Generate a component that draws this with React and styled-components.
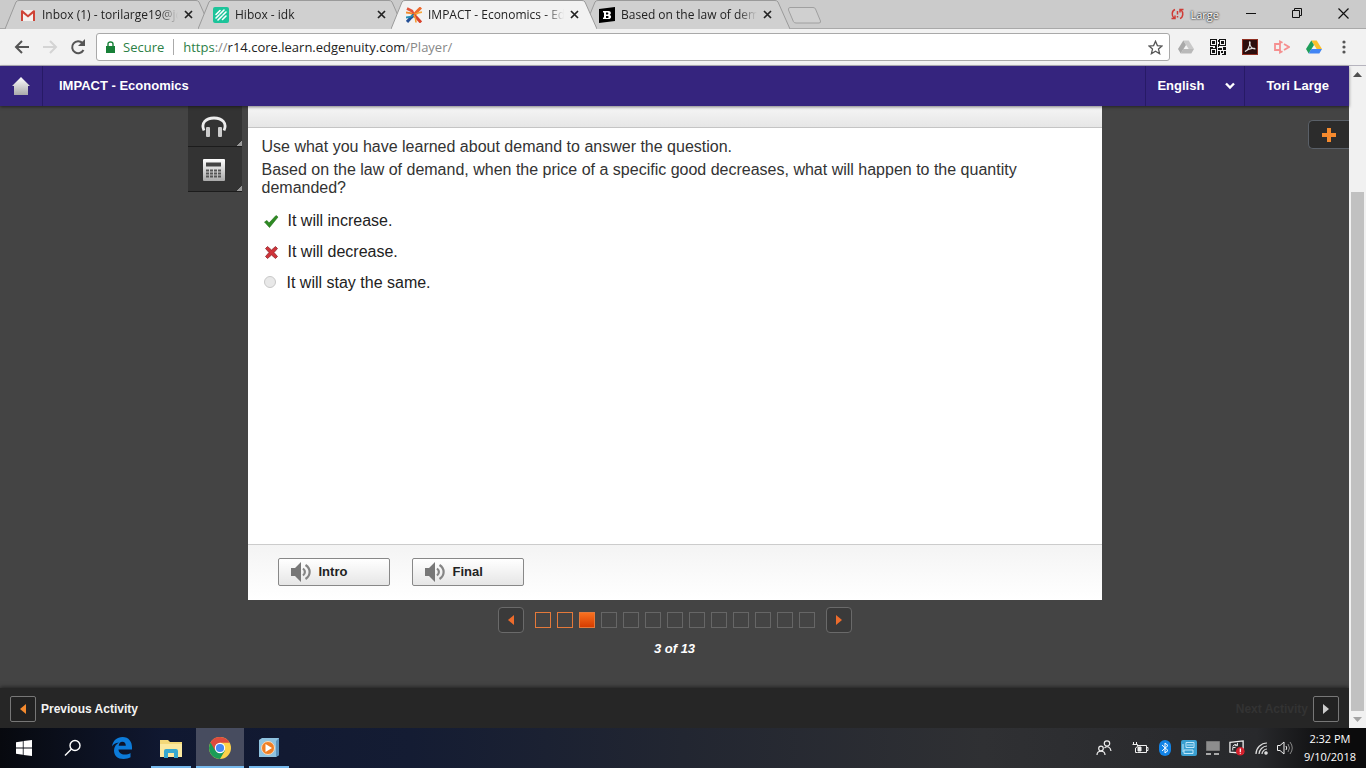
import React, { useState } from 'react'
import styled, { createGlobalStyle } from 'styled-components'

const GlobalStyle = createGlobalStyle`
  * {
    box-sizing: border-box;
  }
  body {
    margin: 0;
    font-family: "Liberation Sans", Arial, sans-serif;
    background: #444;
  }
  button {
    font: inherit;
    color: inherit;
    padding: 0;
    border: 0;
    background: none;
    cursor: pointer;
  }
`

const tabs = [
  { title: 'Inbox (1) - torilarge19@jc', icon: 'gmail' },
  { title: 'Hibox - idk', icon: 'hibox' },
  { title: 'IMPACT - Economics - Ed', icon: 'edgenuity', active: true },
  { title: 'Based on the law of dema', icon: 'brainly' },
]

const options = [
  { id: 'increase', text: 'It will increase.', mark: 'right' },
  { id: 'decrease', text: 'It will decrease.', mark: 'wrong' },
  { id: 'same', text: 'It will stay the same.' },
]

const Favicon = ({ name }) => {
  if (name === 'gmail') {
    return (
      <svg width="16" height="16" viewBox="0 0 16 16">
        <rect x="1" y="3" width="14" height="11" rx="1" fill="#f4f0ee" />
        <path d="M1 4v10h2V6.500l5 4 5-4V14h2V4c0-1-1-1-1.600-.7L8 8 2.600 3.300C2 3 1 3 1 4z" fill="#cf4336" />
      </svg>
    )
  }
  if (name === 'hibox') {
    return (
      <svg width="16" height="16" viewBox="0 0 16 16">
        <rect width="16" height="16" rx="2" fill="#1cc49a" />
        <path d="M3 7.500l4-4M3 11l3-3M7 7l4-4M5 13l4-4M10 8l3-3M9.500 12.500l3.500-3.500" stroke="#fff" strokeWidth="1.600" strokeLinecap="round" />
      </svg>
    )
  }
  if (name === 'edgenuity') {
    return (
      <svg width="16" height="16" viewBox="0 0 16 16" fill="none">
        <path d="M1 1.500l5 2.500 2 4" stroke="#e2543a" strokeWidth="2.600" />
        <path d="M0 5.500L4.500 6 8 8" stroke="#f08a2c" strokeWidth="1.800" />
        <path d="M15 .5L10.500 5 8 8" stroke="#ee6a2c" strokeWidth="3" />
        <path d="M16 5l-4 1-4 2" stroke="#f6a53a" strokeWidth="1.800" />
        <path d="M1 15l4-4.500L8 8" stroke="#244f96" strokeWidth="3" />
        <path d="M0 10.500L4 10l4-2" stroke="#2490b8" strokeWidth="1.800" />
        <path d="M15 15.500L11 11 8 8" stroke="#d8432e" strokeWidth="3" />
        <path d="M10 15.500l-.5-4L8 8" stroke="#f39b33" strokeWidth="1.600" />
      </svg>
    )
  }
  return (
    <svg width="16" height="16" viewBox="0 0 16 16">
      <path d="M0 2l16-2v14L0 16z" fill="#000" />
      <path d="M4 4h5.500c3 0 3 3.500 1 3.900 2.500.5 2 4.100-1 4.100H4v-1.500h1v-5H4zM7 5.500v2h1.500c1.200 0 1.200-2 0-2zM7 9v2h1.700c1.300 0 1.300-2 0-2z" fill="#fff" fillRule="evenodd" />
    </svg>
  )
}

const DriveIcon = ({ grey }) => (
  <svg width="16" height="16" viewBox="0 0 16 16">
    <path d="M5.300 1.500h5.400L16 10h-5.300z" fill={grey ? '#c9c9c9' : '#fbc02d'} />
    <path d="M5.300 1.500L0 10l2.700 4.500L8 6z" fill={grey ? '#a9a9a9' : '#1e9e5a'} />
    <path d="M5.300 10H16l-2.700 4.500H2.700z" fill={grey ? '#b9b9b9' : '#4285f4'} />
  </svg>
)

const QrIcon = () => (
  <svg width="16" height="16" viewBox="0 0 16 16" shapeRendering="crispEdges">
    <path d="M0 0h7v7H0zM9 0h7v7H9zM0 9h7v7H0z" fill="#111" />
    <path d="M1 1h5v5H1zM10 1h5v5h-5zM1 10h5v5H1z" fill="#f2f2f2" />
    <path d="M2 2h3v3H2zM11 2h3v3h-3zM2 11h3v3H2zM8 1h1v2H8zM8 5h1v3H8zM8 9h4v2H8zM13 8h3v3h-3zM8 12h2v4H8zM11 12h2v2h-2zM14 12h2v4h-4v-1h2zM0 8h3v1H0zM5 7h2v2H5z" fill="#111" />
  </svg>
)

const SpeakerIcon = () => (
  <svg width="22" height="20" viewBox="0 0 22 20">
    <path d="M0 6h4l6-6v20l-6-6H0z" fill="#777" />
    <path d="M12 6.500c2.500 2 2.500 5 0 7M14.500 3c5.500 3.500 5.500 10.500 0 14" fill="none" stroke="#858585" strokeWidth="2.200" />
  </svg>
)

const Arrow = ({ left, fill }) => (
  <svg width="8" height="10" viewBox="0 0 8 10">
    <path d={left ? 'M7 0v10L1 5z' : 'M1 0v10l6-5z'} fill={fill} />
  </svg>
)

const App = () => {
  const [answer, setAnswer] = useState('')

  return (
    <Desktop>
      <GlobalStyle />
      <TabStrip>
        {tabs.map((tab) => (
          <Tab key={tab.title} $active={tab.active}>
            <TabShape viewBox="0 0 206 29" preserveAspectRatio="none">
              <path d="M0 29L11 2q1-1.500 3-1.500h177q2 0 3 1.500L206 29" fill={tab.active ? '#f2f2f2' : '#d0d0d0'} stroke="#9a9a9a" />
            </TabShape>
            <Favicon name={tab.icon} />
            <TabTitle>{tab.title}</TabTitle>
            <TabClose aria-label="Close tab">
              <svg width="9" height="9" viewBox="0 0 9 9"><path d="M1 1l7 7M8 1L1 8" stroke="#222" strokeWidth="1.700" /></svg>
            </TabClose>
          </Tab>
        ))}
        <NewTab aria-label="New tab">
          <svg width="34" height="17" viewBox="0 0 34 17">
            <path d="M3 .5h23q2 0 2.500 1.500l5 12q.5 2-1.500 2H9q-2 0-2.600-1.500L1.500 3Q1 .5 3 .5z" fill="#d0d0d0" stroke="#a0a0a0" />
          </svg>
        </NewTab>
        <WindowControls>
          <svg width="13" height="12" viewBox="0 0 13 12" fill="none" stroke="#cf3b35" strokeWidth="1.500">
            <path d="M4 1.500C.5 3 .5 8 3 10M.5 10.500H4V7.500M9 10.500c3.500-1.500 3.500-6.500 1-8.500M12.500 1.500H9v3M6.500 3v3.500M6.500 8v1.500" />
          </svg>
          <Profile>Large</Profile>
          <button aria-label="Minimize"><svg width="11" height="11"><path d="M0 5.500h10" stroke="#111" /></svg></button>
          <button aria-label="Restore">
            <svg width="11" height="11" viewBox="0 0 11 11" fill="none" stroke="#111"><path d="M.5 2.500h7v7h-7zM2.500 2.500v-2h7v7h-2" /></svg>
          </button>
          <button aria-label="Close"><svg width="11" height="11" viewBox="0 0 11 11"><path d="M.5 .5l10 10M10.500 .5l-10 10" stroke="#111" strokeWidth="1.200" /></svg></button>
        </WindowControls>
      </TabStrip>

      <Toolbar>
        <NavButton aria-label="Back">
          <svg width="16" height="14" viewBox="0 0 16 14"><path d="M15 7H2M8 1L2 7l6 6" fill="none" stroke="#555" strokeWidth="2" /></svg>
        </NavButton>
        <NavButton aria-label="Forward">
          <svg width="16" height="14" viewBox="0 0 16 14"><path d="M1 7h13M8 1l6 6-6 6" fill="none" stroke="#d4d4d4" strokeWidth="2" /></svg>
        </NavButton>
        <NavButton aria-label="Reload">
          <svg width="16" height="16" viewBox="0 0 16 16">
            <path d="M13.500 11A6 6 0 1 1 12.500 4" fill="none" stroke="#555" strokeWidth="2" />
            <path d="M15 0v7H8z" fill="#555" />
          </svg>
        </NavButton>
        <AddressBar>
          <svg width="9" height="12" viewBox="0 0 9 12"><path d="M0 5h9v7H0z" fill="#188038" /><path d="M2 6V3q0-2 2.500-2T7 3v3" fill="none" stroke="#188038" strokeWidth="1.400" /></svg>
          <Secure>Secure</Secure>
          <Url><i>https</i>://<b>r14.core.learn.edgenuity.com</b>/Player/</Url>
          <svg width="15" height="15" viewBox="0 0 15 15"><path d="M7.500 1.300l1.900 4.300 4.600.4-3.500 3.100 1.100 4.600-4.100-2.500-4.100 2.500 1.100-4.600L1 6l4.600-.4z" fill="none" stroke="#555" strokeWidth="1.300" /></svg>
        </AddressBar>
        <Extensions>
          <DriveIcon grey />
          <QrIcon />
          <svg width="16" height="16" viewBox="0 0 16 16">
            <rect x=".5" y=".5" width="15" height="15" fill="#2c0d0c" stroke="#8f2f22" />
            <path d="M3 12.500c2-.5 5.500-5 4.500-9-.5-1 1-1 .5.500C7.500 7 10 10 13 10c.5-1-5-1.500-10 2.500z" fill="none" stroke="#ddd" strokeWidth="1.100" />
          </svg>
          <svg width="16" height="14" viewBox="0 0 16 14" fill="none" stroke="#f58f8f" strokeWidth="1.800">
            <path d="M6 4H1v6h5z" />
            <path d="M6 4V1.500l2.500 1.300M10 4l5 3-5 3M8.500 11.200L6 12.500V10" />
          </svg>
          <DriveIcon />
          <svg width="12" height="14" viewBox="0 0 12 14" fill="#555"><circle cx="6" cy="2" r="1.600" /><circle cx="6" cy="7" r="1.600" /><circle cx="6" cy="12" r="1.600" /></svg>
        </Extensions>
      </Toolbar>

      <Viewport>
        <Page>
          <Header>
            <HomeLink href="#" aria-label="Home">
              <svg width="20" height="20" viewBox="0 0 20 20">
                <defs><linearGradient id="silver" x2="0" y2="1"><stop offset="0" stopColor="#fff" /><stop offset="1" stopColor="#aaa" /></linearGradient></defs>
                <path d="M10 1l9 9h-2v9H3v-9H1z" fill="url(#silver)" />
              </svg>
            </HomeLink>
            <Course>IMPACT - Economics</Course>
            <Language>
              English
              <svg width="10" height="8" viewBox="0 0 10 8"><path d="M1 1.500l4 4 4-4" fill="none" stroke="#fff" strokeWidth="2.400" /></svg>
            </Language>
            <UserName>Tori Large</UserName>
          </Header>

          <Stage>
            <Tools>
              <ToolButton aria-label="Read aloud" $height={41}>
                <svg width="26" height="22" viewBox="0 0 26 22">
                  <path d="M3 14.500C-.5 7 5 2 13 2s13.500 5 10 12.500" fill="none" stroke="#eee" strokeWidth="2.800" />
                  <rect x="5" y="11" width="4" height="10" rx="1" fill="#ccc" />
                  <rect x="17" y="11" width="4" height="10" rx="1" fill="#ccc" />
                </svg>
              </ToolButton>
              <ToolButton aria-label="Calculator" $height={45}>
                <svg width="22" height="22" viewBox="0 0 22 22">
                  <rect width="22" height="22" rx="1" fill="url(#silver)" />
                  <path d="M3 3.500h15v4H3z" fill="#444" />
                  <path d="M3 11.500h16M3 14.500h16M3 17.500h16" stroke="#555" strokeWidth="2" strokeDasharray="3 1" />
                </svg>
              </ToolButton>
            </Tools>

            <Card>
              <CardTop />
              <Question>
                <Prompt>Use what you have learned about demand to answer the question.</Prompt>
                <Prompt>
                  Based on the law of demand, when the price of a specific good decreases, what will happen to the quantity demanded?
                </Prompt>
                <Options>
                  {options.map((option) => (
                    <Option key={option.id}>
                      {option.mark === 'right' && (
                        <svg width="16" height="16" viewBox="0 0 16 16"><path d="M1.500 9l2.500-1.500 2 2.500L13 2.500 15 4 6.500 14.500z" fill="#2e8b22" stroke="#1d6a16" strokeWidth=".6" /></svg>
                      )}
                      {option.mark === 'wrong' && (
                        <svg width="16" height="16" viewBox="0 0 16 16"><path d="M4.500 2.500L8.500 6l4-3.500 2 2L11 8.500l3.500 4-2 2-4-3.500-4 3.500-2-2 3.500-4-3.500-4z" fill="#cf3339" stroke="#8e2a2e" strokeWidth=".8" /></svg>
                      )}
                      {!option.mark && (
                        <Radio
                          type="radio"
                          name="answer"
                          value={option.id}
                          checked={answer === option.id}
                          onChange={(e) => setAnswer(e.target.value)}
                        />
                      )}
                      {option.text}
                    </Option>
                  ))}
                </Options>
              </Question>
              <CardFooter>
                <AudioButton><SpeakerIcon />Intro</AudioButton>
                <AudioButton><SpeakerIcon />Final</AudioButton>
              </CardFooter>
            </Card>

            <AddNote aria-label="Add note">
              <svg width="14" height="14" viewBox="0 0 14 14"><path d="M7 0v14M0 7h14" stroke="#f58a2e" strokeWidth="4" /></svg>
            </AddNote>
          </Stage>

          <Pager>
            <Frames>
              <PagerButton aria-label="Previous"><Arrow left fill="#ee6c2c" /></PagerButton>
              <FrameList>
                {Array.from({ length: 13 }, (_, i) => (
                  <Frame key={i} $seen={i < 2} $current={i === 2} aria-label={`Frame ${i + 1}`} />
                ))}
              </FrameList>
              <PagerButton aria-label="Next"><Arrow fill="#ee6c2c" /></PagerButton>
            </Frames>
            <Count>3 of 13</Count>
          </Pager>

          <Footer>
            <Step>
              <StepBox><Arrow left fill="#f58a2e" /></StepBox>
              Previous Activity
            </Step>
            <Step $dim>
              Next Activity
              <StepBox><Arrow fill="#ccc" /></StepBox>
            </Step>
          </Footer>
        </Page>
        <Scrollbar>
          <ScrollEnd><svg width="9" height="5"><path d="M0 5h9L4.500 0z" fill="#505050" /></svg></ScrollEnd>
          <ScrollGap />
          <Thumb />
          <ScrollEnd><svg width="9" height="5"><path d="M0 0h9L4.500 5z" fill="#a3a3a3" /></svg></ScrollEnd>
        </Scrollbar>
      </Viewport>

      <Taskbar>
        <TaskButton aria-label="Start">
          <svg width="16" height="16" viewBox="0 0 16 16" fill="#fff"><path d="M0 2.200L6.800 1.200v6.300H0zM7.600 1.100L16 0v7.500H7.600zM0 8.400h6.800v6.400L0 13.800zM7.600 8.400H16V16l-8.400-1.100z" /></svg>
        </TaskButton>
        <TaskButton aria-label="Search">
          <svg width="18" height="18" viewBox="0 0 18 18" fill="none" stroke="#fff" strokeWidth="1.400"><circle cx="11" cy="6.500" r="5" /><path d="M7.500 10L1 16.500" /></svg>
        </TaskButton>
        <TaskButton aria-label="Edge">
          <svg width="20" height="22" viewBox="0 0 20 22"><path d="M0 9.500C1 3.500 5 0 10.500 0 17 0 20 5 20 10v2.500H6.500c.2 3.500 3 5 6 5 2.500 0 4.500-.7 6-1.600v4.400c-2 1-4.300 1.700-7 1.700C5.500 22 2 18.500 2 13.500c0-3.500 2-6.500 5-8C3.500 5.800 1.200 7.500 0 9.500zm6.700-.8h7.100c0-2.400-1.300-3.900-3.500-3.900-2 0-3.300 1.500-3.600 3.900z" fill="#0c7bd9" fillRule="evenodd" /></svg>
        </TaskButton>
        <TaskButton aria-label="File Explorer" $open>
          <svg width="22" height="19" viewBox="0 0 22 19">
            <path d="M0 1h8l2 2h12v15H0z" fill="#f3d879" /><path d="M0 5h22v13H0z" fill="#fbe9a0" />
            <path d="M4 19v-7q0-2 2-2h10q2 0 2 2v7h-4v-5H8v5z" fill="#35a8d0" />
          </svg>
        </TaskButton>
        <TaskButton aria-label="Chrome" $open $focused>
          <svg width="22" height="22" viewBox="0 0 22 22">
            <circle cx="11" cy="11" r="11" fill="#fdd14a" />
            <path d="M11 11L1.500 5.500A11 11 0 0 0 11 22l5-8.500z" fill="#1a9c57" />
            <path d="M1.500 5.500A11 11 0 0 1 20.600 5.700H11L6.200 13.500z" fill="#dd4b3e" />
            <circle cx="11" cy="11" r="5.200" fill="#fff" /><circle cx="11" cy="11" r="4.100" fill="#4688f4" />
          </svg>
        </TaskButton>
        <TaskButton aria-label="Media Player" $open>
          <svg width="20" height="20" viewBox="0 0 20 20">
            <path d="M3 0h17v17l-3 2H0V2z" fill="#8fc3e0" /><path d="M17 3l3-3v17l-3 2z" fill="#5b93bd" />
            <circle cx="9" cy="10" r="6.500" fill="#f07f24" stroke="#fbd9b8" /><path d="M6.500 6v8l6.500-4z" fill="#fff" />
          </svg>
        </TaskButton>
        <Tray>
          <svg width="16" height="16" viewBox="0 0 16 16" fill="none" stroke="#eee" strokeWidth="1.200"><circle cx="11" cy="3.500" r="2.700" /><path d="M8.500 8c2.500-2.500 6-1 6.500 3" /><circle cx="5" cy="8.500" r="2.300" /><path d="M1 15c0-5 8-5 8 0" /></svg>
          <svg width="17" height="12" viewBox="0 0 17 12" fill="none" stroke="#eee"><path d="M5.500 3.500h9v7h-9M14.500 5.500h1.500v3h-1.500M1.500 0v2M4.500 0v2M.5 2.500h5v2l-2 1.500v4.500h2" /><path d="M6 5h3v4H6z" fill="#eee" /></svg>
          <svg width="16" height="16" viewBox="0 0 16 16"><rect x="2" width="12" height="16" rx="6" fill="#1283e6" /><path d="M5 5l6 5.500L8 13V3l3 2.500L5 11" fill="none" stroke="#fff" /></svg>
          <svg width="16" height="16" viewBox="0 0 16 16"><rect width="16" height="16" rx="2" fill="#3a9fd0" /><path d="M5 2.500h8v5H5zM3 10h9v3.500H3zM6 5h6M2 4v8" fill="none" stroke="#bfe6fa" /></svg>
          <svg width="16" height="16" viewBox="0 0 16 16"><path d="M1.500 1.500h13v9h-13z" fill="#8d8d8d" stroke="#777" /><path d="M1 13h5v2H1zM9 13h5v2H9z" fill="#aaa" /></svg>
          <svg width="16" height="16" viewBox="0 0 17 17"><path d="M1 2.500L15 1v13L1 13z" fill="none" stroke="#eee" strokeWidth="1.400" /><path d="M4 7q2-4 5-1M9 3v3H6M4 11V8h3" fill="none" stroke="#eee" /><circle cx="12" cy="12" r="4.600" fill="#d3202c" /><path d="M12 9v4M12 14v1" stroke="#fff" strokeWidth="1.300" /></svg>
          <svg width="16" height="13" viewBox="0 0 16 13" fill="none" stroke="#ddd" strokeWidth="1.200"><path d="M3 12C3 6 8 1 14 1M6 12c0-4 4-8 8-8M9 12c0-2.500 2.500-5 5-5" /><circle cx="13" cy="11" r="1.200" fill="#ddd" /></svg>
          <svg width="16" height="14" viewBox="0 0 16 14" fill="none" stroke="#eee"><path d="M.5 4.500h2.500l4-3.500v12l-4-3.500H.5z" /><path d="M9 5q1.500 2 0 4" /><path d="M11 3q3 4 0 8M13 1q4.500 6 0 12" stroke="#888" /></svg>
          <Clock>
            <span>2:32 PM</span>
            <span>9/10/2018</span>
          </Clock>
        </Tray>
      </Taskbar>
    </Desktop>
  )
}

export default App

const Desktop = styled.div`
  display: flex;
  flex-direction: column;
  height: 100vh;
  overflow: hidden;
`

const TabStrip = styled.div`
  display: flex;
  height: 29px;
  flex: none;
  padding-left: 5px;
  background: #cbcbcb;
  border-bottom: 1px solid #a9a9a9;
  font-family: "Open Sans", "Noto Sans", sans-serif;
  font-size: 12px;
`

const Tab = styled.div`
  position: relative;
  z-index: ${(p) => (p.$active ? 2 : 1)};
  display: flex;
  align-items: center;
  gap: 6px;
  width: 206px;
  height: 29px;
  margin-right: -13px;
  padding: 0 18px 0 15px;
  color: #222;

  > svg {
    position: relative;
    flex: none;
  }
`

const TabShape = styled.svg`
  && {
    position: absolute;
    inset: 0;
    width: 100%;
    height: 100%;
  }
`

const TabTitle = styled.span`
  position: relative;
  flex: 1;
  overflow: hidden;
  white-space: nowrap;
  mask-image: linear-gradient(to right, #000 86%, transparent);
`

const TabClose = styled.button`
  position: relative;
  display: flex;
`

const NewTab = styled.button`
  display: flex;
  align-items: center;
  height: 31px;
  margin-left: 10px;
`

const WindowControls = styled.div`
  display: flex;
  align-items: center;
  gap: 35px;
  margin-left: auto;
  padding-right: 17px;

  > svg {
    margin-right: -28px;
  }
`

const Profile = styled.span`
  color: #fff;
  font-size: 11px;
  margin-right: -8px;
  text-shadow: 0 0 2px #000, 0 0 2px #444;
`

const Toolbar = styled.div`
  display: flex;
  align-items: center;
  flex: none;
  height: 37px;
  padding: 0 14px;
  background: #f2f2f2;
  border-bottom: 1px solid #b6b4be;
`

const NavButton = styled.button`
  display: flex;
  margin-right: 12px;
`

const AddressBar = styled.div`
  display: flex;
  align-items: center;
  flex: 1;
  height: 28px;
  margin-left: -2px;
  padding: 0 6px 0 9px;
  background: #fff;
  border: 1px solid #a9a9a9;
  border-radius: 3px;
  font-family: "Open Sans", "Noto Sans", sans-serif;
  font-size: 13px;
`

const Secure = styled.span`
  margin-left: 8px;
  padding-right: 9px;
  color: #2c7f46;
  line-height: 16px;
  border-right: 1px solid #aaa;
`

const Url = styled.span`
  flex: 1;
  margin-left: 9px;
  color: #888;

  i {
    font-style: normal;
    color: #2c7f46;
  }
  b {
    font-weight: normal;
    color: #222;
  }
`

const Extensions = styled.div`
  display: flex;
  align-items: center;
  gap: 16px;
  margin-left: 8px;
  padding-right: 2px;
`

const Viewport = styled.div`
  display: flex;
  flex: 1;
  min-height: 0;
`

const Page = styled.div`
  display: flex;
  flex-direction: column;
  flex: 1;
  min-width: 0;
  background: #444;
`

const Header = styled.header`
  position: relative;
  display: flex;
  flex: none;
  height: 40px;
  background: #35247e;
  color: #fff;
  font-size: 13px;
  font-weight: bold;
  line-height: 40px;
  box-shadow: 0 1px 3px rgba(0, 0, 0, 0.5);
`

const HomeLink = styled.a`
  display: flex;
  align-items: center;
  justify-content: center;
  width: 43px;
  border-right: 1px solid #271a66;
`

const Course = styled.span`
  flex: 1;
  padding-left: 16px;
`

const Language = styled.button`
  display: flex;
  align-items: center;
  justify-content: space-between;
  width: 100px;
  padding: 0 9px 0 11px;
  border-left: 1px solid #271a66;
  border-right: 1px solid #271a66;
`

const UserName = styled.span`
  padding: 0 20px 0 21px;
`

const Stage = styled.div`
  display: grid;
  grid-template-columns: 1fr minmax(0, 854px) 1fr;
  flex: 1;
`

const Tools = styled.div`
  display: flex;
  flex-direction: column;
  justify-self: end;
  align-self: start;
  width: 54px;
  margin-right: 6px;
`

const ToolButton = styled.button`
  display: flex;
  align-items: center;
  justify-content: center;
  height: ${(p) => p.$height}px;
  padding: 2px 2px 0 0;
  background: linear-gradient(315deg, #999 4px, transparent 4px), #333;
  border-bottom: 1px solid #1c1c1c;
`

const Card = styled.main`
  display: flex;
  flex-direction: column;
  background: #fff;
`

const CardTop = styled.div`
  height: 22px;
  background: linear-gradient(#f6f6f6, #e6e6e6);
  border-bottom: 1px solid #c4c4c4;
`

const Question = styled.div`
  flex: 1;
  padding: 10px 14px;
  color: #333;
  font-size: 16px;
  line-height: 18px;
`

const Prompt = styled.p`
  margin: 0 0 5px;
`

const Options = styled.div`
  display: grid;
  gap: 13px;
  margin-top: 15px;
  color: #222;
`

const Option = styled.label`
  display: flex;
  align-items: center;
  gap: 9px;
  padding-left: 1px;
`

const Radio = styled.input`
  appearance: none;
  width: 12px;
  height: 12px;
  margin: 0 2px 2px 1px;
  border: 1px solid #c8c8c8;
  border-radius: 50%;
  background: #e8e8e8;

  &:checked {
    background: #555;
  }
`

const CardFooter = styled.div`
  display: flex;
  align-items: center;
  gap: 22px;
  height: 56px;
  padding: 0 30px 2px;
  border-top: 1px solid #ccc;
  background: linear-gradient(#f4f4f4, #fff);
`

const AudioButton = styled.button`
  display: flex;
  align-items: center;
  gap: 6px;
  width: 112px;
  height: 28px;
  padding-left: 12px;
  border: 1px solid #888;
  border-radius: 2px;
  background: linear-gradient(#fff, #e6e6e6);
  color: #222;
  font-size: 13px;
  font-weight: bold;
`

const AddNote = styled.button`
  display: flex;
  align-items: center;
  justify-content: center;
  justify-self: end;
  width: 41px;
  height: 29px;
  margin-top: 14px;
  border: 1px solid #5a6068;
  border-right: 0;
  border-radius: 5px 0 0 5px;
  background: #2c2c2c;
`

const Pager = styled.nav`
  display: flex;
  flex-direction: column;
  align-items: center;
  flex: none;
  height: 88px;
  padding-top: 7px;
`

const Frames = styled.div`
  display: flex;
  align-items: center;
  gap: 11px;
`

const FrameList = styled.div`
  display: flex;
  gap: 6px;
`

const Frame = styled.button`
  width: 16px;
  height: 16px;
  border: 1px solid ${(p) => (p.$seen || p.$current ? '#e5793a' : '#666')};
  background: ${(p) => (p.$current ? 'linear-gradient(#f8701f, #d63c00)' : 'none')};
`

const PagerButton = styled.button`
  display: flex;
  align-items: center;
  justify-content: center;
  width: 26px;
  height: 26px;
  border: 1px solid #6a6a6a;
  border-radius: 4px;
  background: #3a3a3a;
`

const Count = styled.span`
  margin-top: 8px;
  color: #fff;
  font-size: 13px;
  font-weight: bold;
  font-style: italic;
  line-height: 16px;
`

const Footer = styled.footer`
  display: flex;
  align-items: center;
  justify-content: space-between;
  flex: none;
  height: 40px;
  padding: 2px 10px 0;
  background: #262626;
  box-shadow: 0 -1px 4px rgba(0, 0, 0, 0.5);
`

const Step = styled.button`
  display: flex;
  align-items: center;
  gap: 5px;
  color: ${(p) => (p.$dim ? '#333' : '#f2f2f2')};
  font-size: 12px;
  font-weight: bold;
`

const StepBox = styled.span`
  display: flex;
  align-items: center;
  justify-content: center;
  width: 26px;
  height: 26px;
  border: 1px solid #777;
  border-radius: 2px;
  background: #222;
`

const Scrollbar = styled.div`
  display: flex;
  flex-direction: column;
  width: 17px;
  background: #f1f1f1;
`

const ScrollEnd = styled.div`
  display: flex;
  align-items: center;
  justify-content: center;
  flex: none;
  height: 17px;
`

const ScrollGap = styled.div`
  flex: 109;
`

const Thumb = styled.div`
  flex: 519;
  margin: 0 2px;
  background: #c1c1c1;
`

const Taskbar = styled.div`
  display: flex;
  gap: 1px;
  flex: none;
  height: 40px;
  background: linear-gradient(to right, #07090e, #101831 12%, #141c33 30%, #222631 50%, #2f3033 72%, #28292c 92%, #0b0b0c 98%);
`

const TaskButton = styled.button`
  display: flex;
  align-items: center;
  justify-content: center;
  width: 48px;
  height: 40px;
  background: ${(p) => (p.$focused ? '#474c5f' : 'none')};
  border: solid transparent;
  border-width: 0 ${(p) => (p.$open && !p.$focused ? 4 : 0)}px;
  background-clip: padding-box;
  box-shadow: none;
  background-image: ${(p) => (p.$open ? 'linear-gradient(#76b9ed, #76b9ed)' : 'none')};
  background-size: 100% 2px;
  background-position: bottom;
  background-repeat: no-repeat;
`

const Tray = styled.div`
  display: flex;
  align-items: center;
  gap: 8px;
  margin-left: auto;
  padding-right: 10px;

  > svg:first-child {
    margin-right: 12px;
  }
`

const Clock = styled.div`
  display: flex;
  flex-direction: column;
  align-items: center;
  margin-left: 3px;
  color: #fff;
  font-family: "Open Sans", "Noto Sans", sans-serif;
  font-size: 11px;
  line-height: 18px;
`
